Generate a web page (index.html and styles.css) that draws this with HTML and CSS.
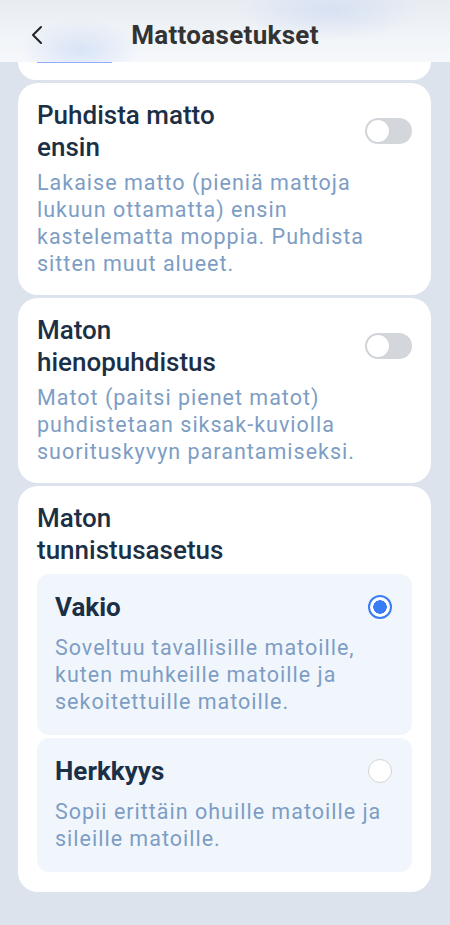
FILE: index.html
```html
<!DOCTYPE html>
<html lang="fi">
<head>
<meta charset="utf-8">
<link rel="stylesheet" href="styles.css">
</head>
<body>
<header class="topbar">
  <div class="back">
    <svg width="14" height="22" viewBox="0 0 14 22"><path d="M11 3 L3 11 L11 19" fill="none" stroke="#222" stroke-width="2" stroke-linecap="round" stroke-linejoin="round"/></svg>
  </div>
  <div class="title">Mattoasetukset</div>
</header>
<main class="content">
  <div class="card partial"><div class="tabline"></div></div>

  <section class="card">
    <div class="row">
      <div class="row-title">Puhdista matto<br>ensin</div>
      <div class="toggle"><div class="knob"></div></div>
    </div>
    <p class="desc">Lakaise matto (pieniä mattoja lukuun ottamatta) ensin kastelematta moppia. Puhdista sitten muut alueet.</p>
  </section>

  <section class="card">
    <div class="row">
      <div class="row-title">Maton<br>hienopuhdistus</div>
      <div class="toggle"><div class="knob"></div></div>
    </div>
    <p class="desc">Matot (paitsi pienet matot) puhdistetaan siksak-kuviolla suorituskyvyn parantamiseksi.</p>
  </section>

  <section class="card card-options">
    <div class="row-title">Maton<br>tunnistusasetus</div>
    <div class="options">
      <div class="option">
        <div class="opt-head">
          <div class="opt-title">Vakio</div>
          <div class="radio on"></div>
        </div>
        <p class="desc opt-desc">Soveltuu tavallisille matoille, kuten muhkeille matoille ja sekoitettuille matoille.</p>
      </div>
      <div class="option">
        <div class="opt-head">
          <div class="opt-title">Herkkyys</div>
          <div class="radio"></div>
        </div>
        <p class="desc opt-desc">Sopii erittäin ohuille matoille ja sileille matoille.</p>
      </div>
    </div>
  </section>
</main>
</body>
</html>
```
FILE: styles.css
```css
* { box-sizing: border-box; }
html, body { margin: 0; padding: 0; }
body {
  background: #dce3ec;
  font-family: Roboto, "Noto Sans", sans-serif;
  width: 450px;
  min-height: 925px;
}
.topbar {
  height: 62px;
  display: flex;
  align-items: center;
  justify-content: center;
  position: relative;
  background:
    radial-gradient(ellipse 60px 30px at 80px 50px, rgba(205,220,245,0.7), rgba(205,220,245,0)),
    radial-gradient(ellipse 90px 30px at 330px 10px, rgba(210,222,242,0.8), rgba(210,222,242,0)),
    linear-gradient(180deg, #e8ecf2 0%, #f1f4f8 60%, #f6f8fb 100%);
}
.back {
  position: absolute;
  left: 30px;
  top: 24px;
  width: 14px;
  height: 22px;
}
.back svg { display: block; }
.title {
  font-size: 26px;
  font-weight: 700;
  color: #333;
  letter-spacing: 0.3px;
  margin-top: 7px;
}
.content {
  padding: 0 19px 0 18px;
  display: flex;
  flex-direction: column;
  gap: 3px;
}
.card {
  background: #fff;
  border-radius: 20px;
  padding: 16px 19px 18px 19px;
}
.card.partial {
  height: 18px;
  padding: 0 19px;
  border-radius: 0 0 20px 20px;
}
.tabline {
  width: 75px;
  height: 2px;
  background: #8db0f6;
  margin-top: -1px;
}
.row {
  display: flex;
  align-items: center;
  justify-content: space-between;
}
.row-title {
  font-size: 26px;
  font-weight: 500;
  line-height: 32px;
  color: #1b3046;
}
.toggle {
  width: 47px;
  height: 26px;
  border-radius: 13px;
  background: #d3d6da;
  position: relative;
  flex: none;
}
.knob {
  position: absolute;
  left: 2px;
  top: 2px;
  width: 22px;
  height: 22px;
  border-radius: 50%;
  background: #fff;
  box-shadow: 0 0 0 1px #cfd2d6;
}
.desc {
  margin: 6px 0 0 0;
  padding-right: 20px;
  font-size: 21.5px;
  line-height: 27px;
  letter-spacing: 1px;
  color: #7d9dc4;
}
.card-options { padding-bottom: 20px; }
.options {
  margin-top: 8px;
  display: flex;
  flex-direction: column;
  gap: 3px;
}
.option {
  background: #f1f6fd;
  border-radius: 12px;
  padding: 18px 19px 20px 18px;
}
.opt-head {
  display: flex;
  align-items: center;
  justify-content: space-between;
}
.opt-title {
  font-size: 26px;
  font-weight: 700;
  line-height: 30px;
  color: #1b3046;
}
.opt-desc { margin-top: 12px; padding-right: 0; }
.radio {
  width: 24px;
  height: 24px;
  border-radius: 50%;
  border: 1.5px solid #d3d3d3;
  background: #fff;
  margin-right: 1px;
  flex: none;
}
.radio.on {
  border: 2px solid #3a7cf6;
  background: radial-gradient(circle, #3a7cf6 0 6.5px, #fff 7px);
}
```
